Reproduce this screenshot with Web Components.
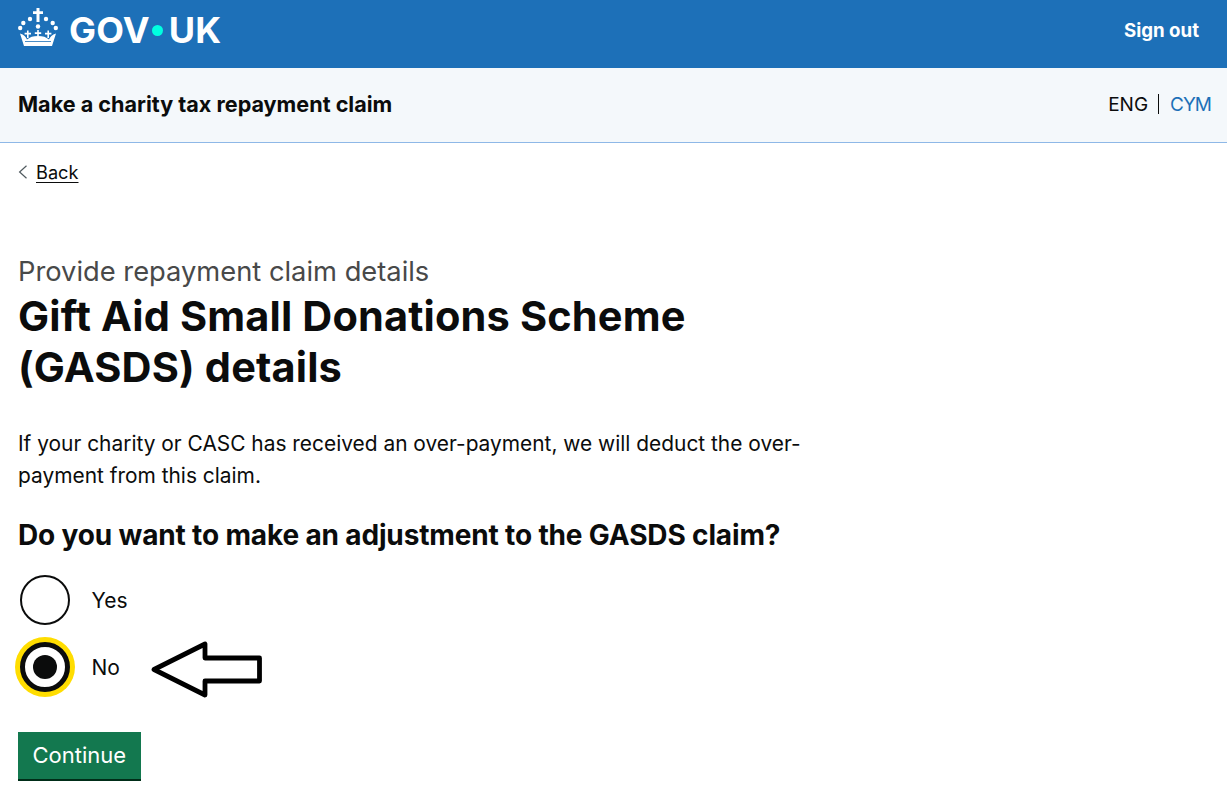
<!DOCTYPE html>
<html lang="en"><head><meta charset="utf-8"><title>Gift Aid Small Donations Scheme</title>
<style>html,body{margin:0;padding:0;background:#fff;color:#0b0c0c;font-family:Inter,"Liberation Sans",sans-serif}body{min-height:795px}</style></head>
<body>
<gov-header></gov-header>
<service-bar></service-bar>
<back-link>Back</back-link>
<claim-main></claim-main>
<script>
function def(name,html){customElements.define(name,class extends HTMLElement{constructor(){super();this.attachShadow({mode:'open'}).innerHTML=html;}});}
def('gov-header',`<style>
:host{display:flex;height:68px;background:#1d70b8;color:#fff;align-items:center;justify-content:space-between;padding:0 28px 0 18px;font-family:Inter,sans-serif}
.logo{display:flex;align-items:center;gap:11px;margin-top:-8px}
.logo svg{margin-bottom:6px}
.word{font:700 36px/1 Inter,sans-serif;display:flex;align-items:center;letter-spacing:.2px}
.dot{width:11px;height:11px;border-radius:50%;background:#00ffe0;margin:0 6px 0 2px}
.out{font-weight:700;font-size:18.700px;margin-top:-7px}
</style>
<div class="logo"><svg width="40" height="38" viewBox="0 0 40 38" fill="#fff">
<path d="M18.500 0h3v3.300h3.500v2.800h-3.500V14h-3V6.100H15V3.300h3.500z"/>
<circle cx="2.200" cy="20" r="2.200"/><circle cx="37.800" cy="20" r="2.200"/><circle cx="5.300" cy="15" r="2.200"/><circle cx="34.700" cy="15" r="2.200"/><circle cx="12" cy="11" r="2.200"/><circle cx="28" cy="11" r="2.200"/><circle cx="20" cy="18.500" r="2.200"/>
<path d="M2 25.500C6 26.500 8 29 9 31.500 12 29 15 28 20 28S28 29 31 31.500C32 29 34 26.500 38 25.500L34 38H6z"/>
<path d="M9 22.500h1.600v2.300H13v1.600h-2.400V30H9v-3.600H6.600v-1.600H9zM19.200 22h1.600v2.300h2.400v1.600h-2.400V28h-1.600v-2.100h-2.400v-1.600h2.400zM29.400 22.500H31v2.300h2.400v1.600H31V30h-1.600v-3.600H27v-1.600h2.400z"/>
<path d="M7 33.500h26" stroke="#1d70b8" stroke-width=".8"/>
</svg><div class="word"><span>GOV</span><span class="dot"></span><span>UK</span></div></div>
<div class="out">Sign out</div>`);
def('service-bar',`<style>
:host{display:flex;box-sizing:border-box;height:75px;background:#f4f8fb;border-bottom:1px solid #8eb8e7;align-items:center;justify-content:space-between;padding:0 16px 0 18px;font-family:Inter,sans-serif}
.t{font-weight:700;font-size:21.600px;margin-top:-2px}
.l{display:flex;align-items:center;font-size:19px;margin-top:-2px}
.l i{display:block;width:1px;height:20px;background:#0b0c0c;margin:0 11px 0 10px}
.c{color:#1d70b8;letter-spacing:-1px}
</style><div class="t">Make a charity tax repayment claim</div><div class="l"><span>ENG</span><i></i><span class="c">CYM</span></div>`);
def('back-link',`<style>
:host{display:flex;align-items:center;padding:16px 0 0 18px;height:26px;font:18.200px/26px Inter,sans-serif;gap:8px}
a{color:#0b0c0c;text-decoration:underline;text-underline-offset:3px}
svg{display:block}
</style><svg width="10" height="14" viewBox="0 0 10 14" fill="none" stroke="#505a5f" stroke-width="1.200"><path d="M8.500 .8 1.600 7l6.900 6.200"/></svg><a href="#"><slot></slot></a>`);
def('gov-radio',`<style>
:host{display:flex;align-items:center;height:50px;gap:21.500px;padding-left:2px;font:21px/1 Inter,sans-serif}
.c{box-sizing:border-box;width:50px;height:50px;border-radius:50%;border:2px solid #0b0c0c;background:#fff;display:flex;align-items:center;justify-content:center}
:host([checked]) .c{border-width:5px;box-shadow:0 0 0 5px #ffdd00}
:host([checked]) .c::after{content:"";width:24px;height:24px;border-radius:50%;background:#0b0c0c}
</style><div class="c"></div><slot></slot>`);
def('gov-button',`<style>
:host{display:inline-block;background:#13784f;color:#fff;box-shadow:0 2px 0 #002d18;padding:0 14.500px;height:47px;font:22px/47px Inter,sans-serif}
</style><slot></slot>`);
def('claim-main',`<style>
:host{display:block;position:relative;padding:0 18px;font-family:Inter,sans-serif;color:#0b0c0c}
.cap{margin-top:69px;font-size:27.300px;line-height:36px;color:#484949}
h1{margin:1px 0 0;font-size:41.500px;line-height:51px;font-weight:700;width:760px;letter-spacing:.15px}
p{margin:35px 0 0;font-size:20.900px;line-height:32px;width:800px}
h2{margin:23px 0 0;font-size:28px;line-height:40px;font-weight:700;letter-spacing:-.15px}
.r{display:flex;flex-direction:column;gap:17px;margin-top:20px}
.b{margin-top:40px}
.arrow{position:absolute;left:150px;top:386px}
</style>
<div class="cap">Provide repayment claim details</div>
<h1>Gift Aid Small Donations Scheme (GASDS) details</h1>
<p>If your charity or CASC has received an over-payment, we will deduct the over-payment from this claim.</p>
<h2>Do you want to make an adjustment to the GASDS claim?</h2>
<div class="r"><gov-radio>Yes</gov-radio><gov-radio checked>No</gov-radio></div>
<div class="b"><gov-button>Continue</gov-button></div>
<svg class="arrow" width="114" height="60" viewBox="0 0 114 60" fill="#fff" stroke="#000" stroke-width="4.800" stroke-linejoin="round"><path d="M4 29.500 55 4V18H109.500V41H55V55z"/></svg>`);
</script>
</body></html>
